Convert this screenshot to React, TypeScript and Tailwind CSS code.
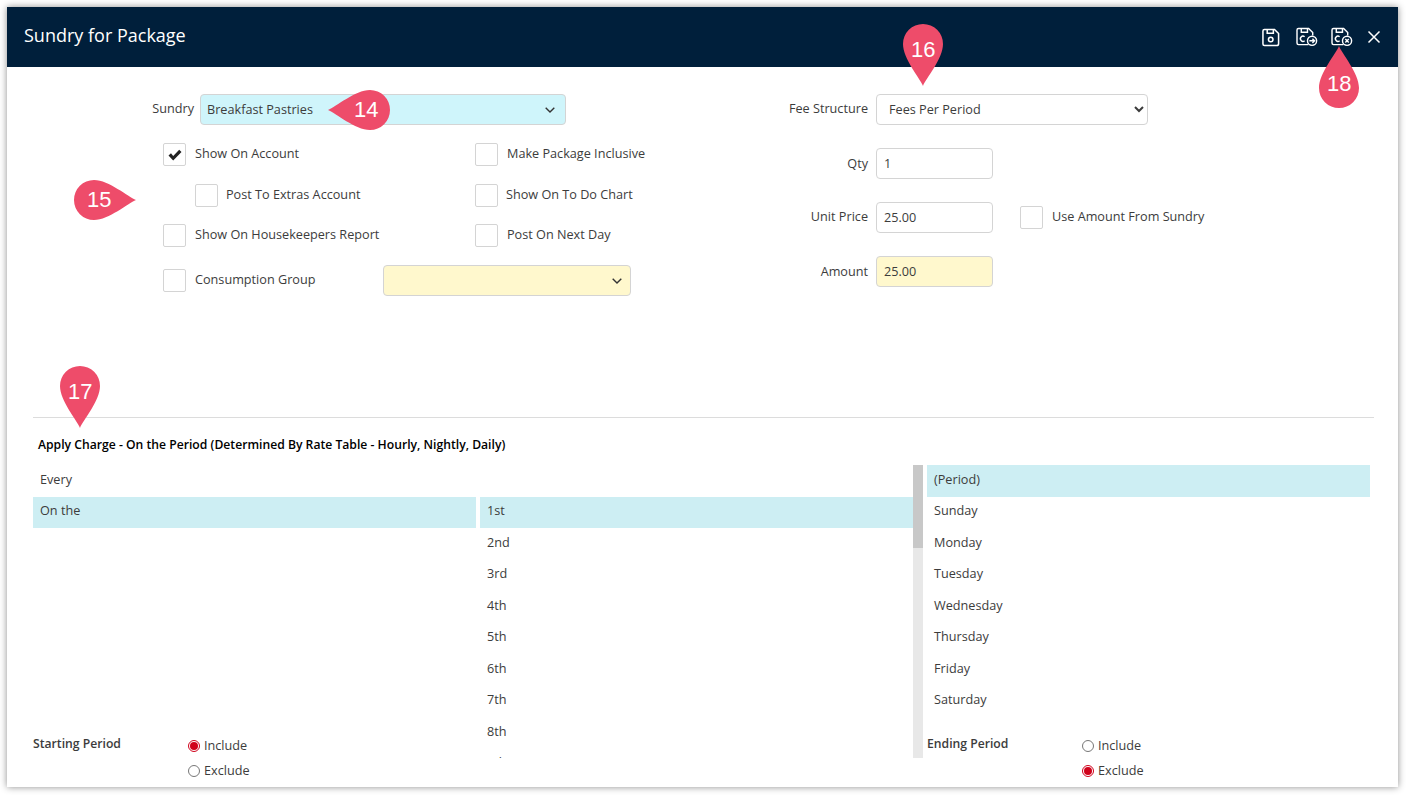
import { ReactNode } from "react"

const FONT = "font-['Open_Sans',sans-serif]"

function FloppyBase({ children }: { children?: ReactNode }) {
  return (
    <>
      <path d="M2.6 1.5h10.6l4.3 4.3v10.7a2 2 0 0 1-2 2H2.6a1.6 1.6 0 0 1-1.6-1.6V3.1a1.6 1.6 0 0 1 1.6-1.6z" />
      <path d="M5.5 1.5v4h6.5v-4" />
      {children}
    </>
  )
}

function SaveIcon() {
  return (
    <svg width="18" height="19" viewBox="0 0 19 20" fill="none" stroke="white" strokeWidth="1.6">
      <FloppyBase>
        <circle cx="9.2" cy="12.2" r="2.4" />
      </FloppyBase>
    </svg>
  )
}

function SaveCopyIcon({ mode }: { mode: "next" | "close" }) {
  return (
    <svg width="22" height="20" viewBox="0 0 23 21" fill="none" stroke="white" strokeWidth="1.5">
      <path d="M13 18.5H2.6A1.6 1.6 0 0 1 1 16.9V3.1a1.6 1.6 0 0 1 1.6-1.6h10.6l4.3 4.3v3" />
      <path d="M5.5 1.5v4h6.5v-4" />
      <path d="M9 10.2a2.7 2.7 0 1 0 0 4.2" />
      <circle cx="16.8" cy="14.5" r="4.8" fill="#001f3b" />
      {mode === "next" ? (
        <path d="M14 14.5h5.4M17.2 12.3l2.2 2.2-2.2 2.2" />
      ) : (
        <path d="M15 12.7l3.6 3.6M18.6 12.7L15 16.3" />
      )}
    </svg>
  )
}

function Pin({ n, className, rotate, textClass }: { n: string; className: string; rotate: string; textClass: string }) {
  return (
    <div className={`absolute z-10 h-[62px] w-[40px] ${className}`}>
      <svg width="40" height="62" viewBox="0 0 40 62" className={rotate}>
        <path d="M20 62C17 54 0 35 0 20a20 20 0 0 1 40 0C40 35 23 54 20 62z" fill="#ee4c6a" />
      </svg>
      <span className={`absolute font-['Liberation_Sans',sans-serif] text-[22px] leading-none text-white ${textClass}`}>{n}</span>
    </div>
  )
}

function Check({ checked, label, className = "" }: { checked?: boolean; label: string; className?: string }) {
  return (
    <div className={`flex items-center ${className}`}>
      <span className="flex h-[23px] w-[23px] shrink-0 items-center justify-center rounded-[2px] border border-[#d4d4d4] bg-white">
        {checked && (
          <svg width="14" height="12" viewBox="0 0 14 12">
            <path d="M0.5 6.5L3 4.3l2.2 2.6L11.2 0.8 13.5 3 5.2 11.4z" fill="#222" />
          </svg>
        )}
      </span>
      <span className="ml-[9px] whitespace-nowrap pb-[2px]">{label}</span>
    </div>
  )
}

function Field({ label, value, yellow, labelClass = "" }: { label: string; value: string; yellow?: boolean; labelClass?: string }) {
  return (
    <div className="flex h-[31px] items-center">
      <span className={`w-[107px] pr-[8px] text-right ${labelClass}`}>{label}</span>
      <div className={`flex h-[31px] w-[117px] items-center rounded-[4px] border border-[#d4d4d4] px-[7px] ${yellow ? "bg-[#fff8cd]" : "bg-white"}`}>
        {value}
      </div>
    </div>
  )
}

function Chevron() {
  return (
    <svg width="10" height="6" viewBox="0 0 10 6" fill="none" stroke="#333" strokeWidth="1.4">
      <path d="M0.7 0.7L5 5l4.3-4.3" />
    </svg>
  )
}

function ListRow({ text, active }: { text?: string; active?: boolean }) {
  return (
    <div className={`flex h-[31.5px] shrink-0 items-center px-[7px] pb-[3px] ${active ? "bg-[#cdeef3]" : ""}`}>{text}</div>
  )
}

function Radio({ checked, label }: { checked?: boolean; label: string }) {
  return (
    <div className="flex h-[25px] items-center">
      {checked ? (
        <span className="flex h-[12px] w-[12px] items-center justify-center rounded-full border border-[#d0021b] bg-white">
          <span className="h-[8px] w-[8px] rounded-full bg-[#d0021b]" />
        </span>
      ) : (
        <span className="h-[12px] w-[12px] rounded-full border border-[#777] bg-white" />
      )}
      <span className="ml-[4px]">{label}</span>
    </div>
  )
}

export default function App() {
  const ordinals = ["1st", "2nd", "3rd", "4th", "5th", "6th", "7th", "8th", "9th"]
  const days = ["(Period)", "Sunday", "Monday", "Tuesday", "Wednesday", "Thursday", "Friday", "Saturday"]

  return (
    <div className={`relative h-[795px] w-[1406px] overflow-hidden bg-white pb-[8px] pl-[7px] pr-[8px] pt-[7px] ${FONT} text-[12.67px] text-[#3c3c3c]`}>
      <div className="flex h-full flex-col overflow-hidden bg-white shadow-[0_0_7px_rgba(0,0,0,0.45)]">
        <div className="flex h-[60px] shrink-0 items-center bg-[#001f3b] pl-[17px] pr-[17px]">
          <span className="mb-[4px] text-[18px] text-white">Sundry for Package</span>
          <div className="ml-auto flex items-center">
            <SaveIcon />
            <span className="ml-[16px] flex"><SaveCopyIcon mode="next" /></span>
            <span className="ml-[13px] flex"><SaveCopyIcon mode="close" /></span>
            <svg className="ml-[14px]" width="14" height="14" viewBox="0 0 14 14" fill="none" stroke="white" strokeWidth="1.5">
              <path d="M1.5 1.5l11 11M12.5 1.5l-11 11" />
            </svg>
          </div>
        </div>

        <div className="flex h-[350px] shrink-0">
          <div className="flex w-[869px] shrink-0 flex-col pl-[156px] pt-[27px]">
            <div className="flex items-center">
              <span className="ml-[-11px] w-[42px] pb-[2px] text-right">Sundry</span>
              <div className="ml-[6px] flex h-[31px] w-[366px] items-center rounded-[4px] border border-[#d4d4d4] bg-[#cff5fb] pl-[6px] pr-[10px]">
                <span>Breakfast Pastries</span>
                <span className="ml-auto flex"><Chevron /></span>
              </div>
            </div>
            <div className="mt-[18px] flex">
              <Check checked label="Show On Account" className="w-[312px]" />
              <Check label="Make Package Inclusive" />
            </div>
            <div className="mt-[18px] flex">
              <Check label="Post To Extras Account" className="ml-[32px] w-[280px] [&>span:last-child]:ml-[8px]" />
              <Check label="Show On To Do Chart" className="[&>span:last-child]:ml-[8px]" />
            </div>
            <div className="mt-[17px] flex">
              <Check label="Show On Housekeepers Report" className="w-[312px]" />
              <Check label="Post On Next Day" />
            </div>
            <div className="mt-[18px] flex items-center">
              <Check label="Consumption Group" className="w-[220px]" />
              <div className="flex h-[31px] w-[248px] items-center justify-end rounded-[4px] border border-[#d4d4d4] bg-[#fff8cd] pr-[8px]">
                <Chevron />
              </div>
            </div>
          </div>

          <div className="flex flex-col pt-[27px]">
            <div className="flex h-[31px] items-center">
              <span className="ml-[-107px] w-[107px] pb-[2px] pr-[8px] text-right">Fee Structure</span>
              <select defaultValue="Fees Per Period" className="h-[31px] w-[272px] rounded-[4px] border border-[#d4d4d4] bg-white pb-[2px] pl-[8px] pr-[4px] text-[12.67px] text-[#3c3c3c]">
                <option>Fees Per Period</option>
              </select>
            </div>
            <div className="ml-[-107px] mt-[23px] flex flex-col gap-[23px]">
              <Field label="Qty" value="1" />
              <div className="flex items-center">
                <Field label="Unit Price" value="25.00" labelClass="pb-[2px]" />
                <Check label="Use Amount From Sundry" className="ml-[27px]" />
              </div>
              <Field label="Amount" value="25.00" yellow />
            </div>
          </div>
        </div>

        <div className="ml-[26px] mr-[24px] h-px shrink-0 bg-[#dcdcdc]" />
        <div className="ml-[31px] flex h-[47px] shrink-0 items-center pt-[8px] text-[12.18px] font-semibold text-black">
          Apply Charge - On the Period (Determined By Rate Table - Hourly, Nightly, Daily)
        </div>

        <div className="ml-[26px] flex min-h-0 flex-1">
          <div className="flex w-[443px] shrink-0 flex-col">
            <ListRow text="Every" />
            <ListRow text="On the" active />
            <div className="mt-auto flex pb-[4px]">
              <span className="mt-[2px] w-[155px] text-[12.2px] font-semibold">Starting Period</span>
              <div className="flex flex-col">
                <Radio checked label="Include" />
                <Radio label="Exclude" />
              </div>
            </div>
          </div>
          <div className="ml-[4px] flex h-[293px] w-[443px] shrink-0">
            <div className="flex w-[433px] shrink-0 flex-col overflow-hidden">
              <ListRow />
              {ordinals.map((o, i) => (
                <ListRow key={o} text={o} active={i === 0} />
              ))}
            </div>
            <div className="w-[10px] shrink-0 bg-[#e8e8e8]">
              <div className="h-[83px] bg-[#c8c8c8]" />
            </div>
          </div>
          <div className="ml-[4px] flex w-[443px] shrink-0 flex-col">
            {days.map((d, i) => (
              <ListRow key={d} text={d} active={i === 0} />
            ))}
            <div className="mt-auto flex pb-[4px]">
              <span className="mt-[2px] w-[155px] text-[12.2px] font-semibold">Ending Period</span>
              <div className="flex flex-col">
                <Radio label="Include" />
                <Radio checked label="Exclude" />
              </div>
            </div>
          </div>
        </div>
      </div>

      <Pin n="14" className="left-[339px] top-[79px]" rotate="rotate-90" textClass="left-[15px] top-[20px]" />
      <Pin n="15" className="left-[85px] top-[169px]" rotate="-rotate-90" textClass="left-[2px] top-[20px]" />
      <Pin n="16" className="left-[903px] top-[24px]" rotate="" textClass="left-[8px] top-[15px]" />
      <Pin n="17" className="left-[60px] top-[366px]" rotate="" textClass="left-[8px] top-[15px]" />
      <Pin n="18" className="left-[1319px] top-[46px]" rotate="rotate-180" textClass="left-[8px] top-[27px]" />
    </div>
  )
}
